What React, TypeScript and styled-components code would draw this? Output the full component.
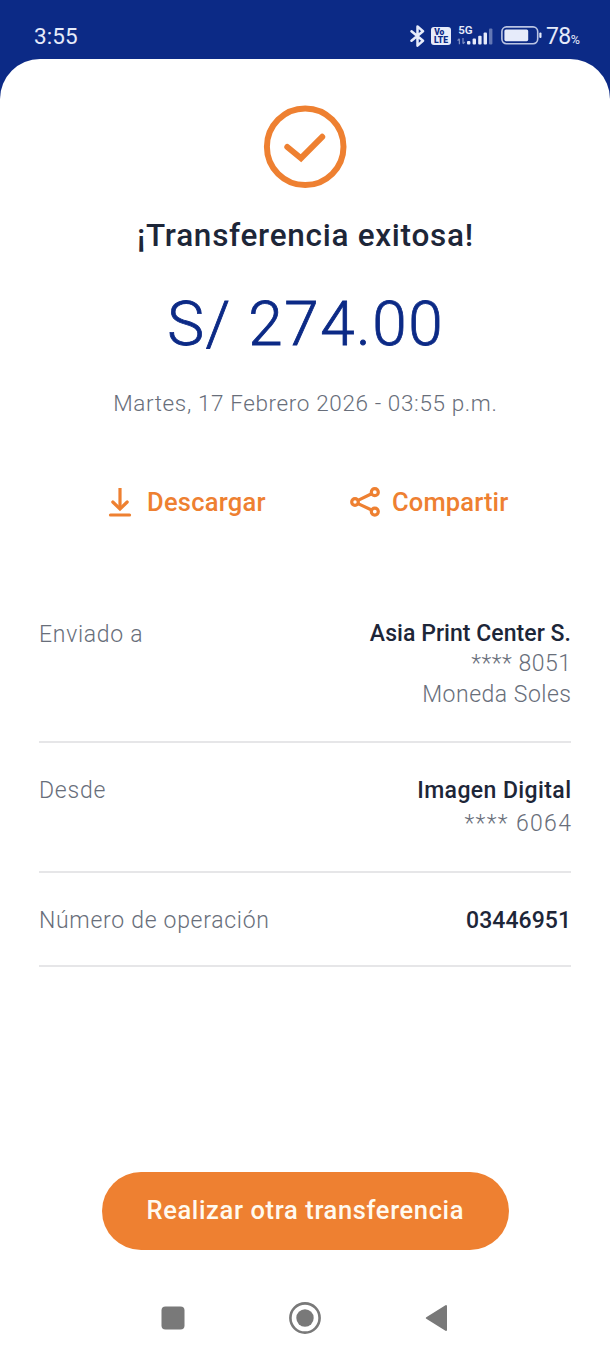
import React from "react";
import styled, { createGlobalStyle } from "styled-components";

const color = {
  navy: "#0c2a86",
  orange: "#ee8031",
  ink: "#1d2638",
  muted: "#686e7a",
  line: "#e6e6e8",
  nav: "#797979",
};

const GlobalStyle = createGlobalStyle`
  * { box-sizing: border-box; }
  body {
    margin: 0;
    background: ${color.navy};
    font-family: Roboto, "Open Sans", sans-serif;
  }
  h1, p { margin: 0; }
  svg { display: block; flex: none; }
`;

const Screen = styled.div`
  width: 610px;
  height: 1356px;
  display: flex;
  flex-direction: column;
  background: ${color.navy};
  overflow: hidden;
`;

const StatusBar = styled.header`
  height: 59px;
  flex: none;
  display: flex;
  align-items: center;
  justify-content: space-between;
  padding: 13px 30px 0 34px;
  color: #e6ebfa;
`;

const Clock = styled.span`
  font-size: 22.5px;
  line-height: 46px;
  letter-spacing: 0.1px;
`;

const StatusIcons = styled.div`
  display: flex;
  align-items: center;
  height: 46px;
`;

const BatteryLevel = styled.span`
  width: 34px;
  height: 46px;
  margin-left: 4px;
  padding-top: 1px;
  font-size: 23px;
  line-height: 46px;
  letter-spacing: -0.6px;
  white-space: nowrap;

  small {
    font-size: 12.5px;
    line-height: 1;
    letter-spacing: 0;
  }
`;

const Sheet = styled.main`
  flex: 1;
  display: flex;
  flex-direction: column;
  align-items: center;
  padding-top: 46px;
  border-radius: 40px 40px 0 0;
  background: #fff;
`;

const Line = styled.p<{ $size: number; $height: number; $weight?: number; $spacing?: number; $tone?: string }>`
  font-size: ${(p) => p.$size}px;
  line-height: ${(p) => p.$height}px;
  font-weight: ${(p) => p.$weight ?? 300};
  letter-spacing: ${(p) => p.$spacing ?? 0}px;
  margin-right: ${(p) => -(p.$spacing ?? 0)}px;
  color: ${(p) => p.$tone ?? color.muted};
  white-space: nowrap;
`;

const Title = styled(Line)`
  margin-top: 27px;
`;

const Amount = styled(Line)`
  margin-top: 33px;
  -webkit-text-stroke: 0.8px ${color.navy};
`;

const DateText = styled(Line)`
  margin-top: 29px;
`;

const Actions = styled.div`
  width: 610px;
  display: flex;
  margin-top: 64px;
  padding-left: 108px;
`;

const Action = styled.button<{ $width: number; $gap: number }>`
  width: ${(p) => p.$width}px;
  height: 40px;
  display: flex;
  align-items: center;
  gap: ${(p) => p.$gap}px;
  padding: 0;
  border: 0;
  background: none;
  font-family: inherit;
  color: ${color.orange};
`;

const Details = styled.section`
  width: 532px;
  margin-top: 97px;
`;

const Row = styled.div<{ $height: number; $top: number }>`
  height: ${(p) => p.$height}px;
  padding-top: ${(p) => p.$top}px;
  display: flex;
  justify-content: space-between;
  align-items: flex-start;
  border-bottom: 2px solid ${color.line};
`;

const Values = styled.div`
  display: flex;
  flex-direction: column;
  align-items: flex-end;
`;

const PrimaryButton = styled.button`
  width: 407px;
  height: 78px;
  margin-top: 205px;
  padding: 0 0 2px;
  display: flex;
  align-items: center;
  justify-content: center;
  border: 0;
  border-radius: 39px;
  background: ${color.orange};
  font-family: inherit;
`;

const NavBar = styled.nav`
  width: 610px;
  margin-top: 50px;
  padding: 0 162px 0 161px;
  display: flex;
  align-items: center;
  justify-content: space-between;
`;

function Bluetooth() {
  return (
    <svg width="15" height="22" viewBox="0 0 15 22" fill="none" stroke="#e6ebfa" strokeWidth="2.5" strokeLinejoin="round" strokeLinecap="round">
      <path d="M1.5 6.2 L13 15.8 L7.5 20.6 V1.4 L13 6.2 L1.5 15.8" />
    </svg>
  );
}

const VolteSvg = styled.svg`
  margin-left: 6px;
`;

function Volte() {
  return (
    <VolteSvg width="20" height="18" viewBox="0 0 20 18">
      <rect width="20" height="18" rx="3" fill="#e6ebfa" />
      <g fill={color.navy} fontFamily="Roboto, sans-serif" fontWeight="900">
        <text x="3.2" y="8.2" fontSize="8.5">Vo</text>
        <text x="3" y="15.9" fontSize="9" textLength="14" lengthAdjust="spacingAndGlyphs">LTE</text>
      </g>
    </VolteSvg>
  );
}

const SignalSvg = styled.svg`
  margin-left: 6px;
`;

function Signal() {
  return (
    <SignalSvg width="36" height="30" viewBox="0 -4 36 30" fill="#e6ebfa">
      <text x="1.2" y="9" fontFamily="Roboto, sans-serif" fontWeight="600" fontSize="11.5" textLength="14.5">5G</text>
      <g fill="none" stroke="#e6ebfa" strokeOpacity="0.5" strokeWidth="1.3">
        <path d="M2.4 19.2 V13.8 M0.6 15.6 L2.4 13.6 M6 13 V18.6 M7.8 16.8 L6 18.9" />
      </g>
      <rect x="10" y="16" width="3.4" height="3.5" rx="1" />
      <rect x="15.6" y="13.5" width="3.4" height="6" rx="1" />
      <rect x="21.2" y="10.8" width="3.4" height="8.7" rx="1" />
      <rect x="26.6" y="7.4" width="3.4" height="12.1" rx="1" />
      <rect x="32" y="3.5" width="3.4" height="16" rx="1" fillOpacity="0.4" />
    </SignalSvg>
  );
}

const BatterySvg = styled.svg`
  margin-left: 8px;
`;

function Battery() {
  return (
    <BatterySvg width="41" height="20" viewBox="0 0 41 20">
      <rect x="0.9" y="0.9" width="35.8" height="16.8" rx="4.6" fill="none" stroke="#e6ebfa" strokeOpacity="0.8" strokeWidth="1.6" />
      <rect x="3.4" y="3.4" width="23.8" height="11.8" rx="1.6" fill="#e6ebfa" />
      <rect x="38.3" y="6.6" width="2.2" height="5.4" rx="1" fill="#e6ebfa" />
    </BatterySvg>
  );
}

function SuccessIcon() {
  return (
    <svg width="84" height="84" viewBox="0 0 84 84" fill="none" stroke={color.orange} strokeWidth="6">
      <circle cx="42.2" cy="41.8" r="38.3" />
      <path d="M24.3 42 L38 53.2 L59.2 31.8" strokeLinecap="round" />
    </svg>
  );
}

function DownloadIcon() {
  return (
    <svg width="24" height="32" viewBox="0 0 24 32" fill="none" stroke={color.orange} strokeWidth="3.2">
      <path d="M12 2 V23" />
      <path d="M4.8 16 L12 23 L19.2 16" strokeLinecap="round" />
      <path d="M2.4 29 H21.6" strokeLinecap="round" strokeWidth="3" />
    </svg>
  );
}

function ShareIcon() {
  return (
    <svg width="31" height="32" viewBox="0 0 31 32" fill="none" stroke={color.orange} strokeWidth="3.2">
      <circle cx="5" cy="16" r="3.3" />
      <circle cx="24.8" cy="6.2" r="3.5" />
      <circle cx="24.8" cy="25.6" r="3.5" />
      <path d="M8 14.4 L21.6 7.8 M8 17.6 L21.6 24" />
    </svg>
  );
}

export default function App() {
  return (
    <>
      <GlobalStyle />
      <Screen>
        <StatusBar>
          <Clock>3:55</Clock>
          <StatusIcons>
            <Bluetooth />
            <Volte />
            <Signal />
            <Battery />
            <BatteryLevel>78<small>%</small></BatteryLevel>
          </StatusIcons>
        </StatusBar>
        <Sheet>
          <SuccessIcon />
          <Title as="h1" $size={31.5} $height={40} $weight={500} $spacing={0.72} $tone={color.ink}>¡Transferencia exitosa!</Title>
          <Amount $size={62} $height={70} $spacing={1.5} $tone={color.navy}>S/ 274.00</Amount>
          <DateText $size={22.5} $height={30} $spacing={0.62}>Martes, 17 Febrero 2026 - 03:55 p.m.</DateText>
          <Actions>
            <Action $width={242} $gap={15}>
              <DownloadIcon />
              <Line as="span" $size={25.5} $height={40} $weight={500} $spacing={0.25} $tone={color.orange}>Descargar</Line>
            </Action>
            <Action $width={160} $gap={11}>
              <ShareIcon />
              <Line as="span" $size={25.5} $height={40} $weight={500} $spacing={0.15} $tone={color.orange}>Compartir</Line>
            </Action>
          </Actions>
          <Details>
            <Row $height={124} $top={0}>
              <Line $size={23} $height={32} $spacing={0.7}>Enviado a</Line>
              <Values>
                <Line $size={23} $height={30} $weight={500} $spacing={0.05} $tone={color.ink}>Asia Print Center S.</Line>
                <Line $size={23} $height={30} $spacing={0.5}>**** 8051</Line>
                <Line $size={23} $height={31} $spacing={0.5}>Moneda Soles</Line>
              </Values>
            </Row>
            <Row $height={130} $top={32}>
              <Line $size={23} $height={32} $spacing={0.8}>Desde</Line>
              <Values>
                <Line $size={23} $height={32} $weight={500} $spacing={0.4} $tone={color.ink}>Imagen Digital</Line>
                <Line $size={23} $height={33} $spacing={1.35}>**** 6064</Line>
              </Values>
            </Row>
            <Row $height={94} $top={32}>
              <Line $size={23} $height={32} $spacing={0.7}>Número de operación</Line>
              <Line $size={23} $height={32} $weight={500} $spacing={0.05} $tone={color.ink}>03446951</Line>
            </Row>
          </Details>
          <PrimaryButton>
            <Line as="span" $size={25.5} $height={40} $weight={500} $spacing={0.63} $tone="#fffaf0">Realizar otra transferencia</Line>
          </PrimaryButton>
          <NavBar>
            <svg width="24" height="24" viewBox="0 0 24 24">
              <rect x="0.5" y="0.5" width="23" height="23" rx="4" fill={color.nav} />
            </svg>
            <svg width="32" height="36" viewBox="0 0 32 36">
              <circle cx="16" cy="18" r="14.6" fill="none" stroke={color.nav} strokeWidth="2.6" />
              <circle cx="16" cy="18" r="8.7" fill={color.nav} />
            </svg>
            <svg width="23" height="28" viewBox="0 0 23 28">
              <path d="M1.8 14 L21 2 V26 Z" fill={color.nav} stroke={color.nav} strokeWidth="2" strokeLinejoin="round" />
            </svg>
          </NavBar>
        </Sheet>
      </Screen>
    </>
  );
}
